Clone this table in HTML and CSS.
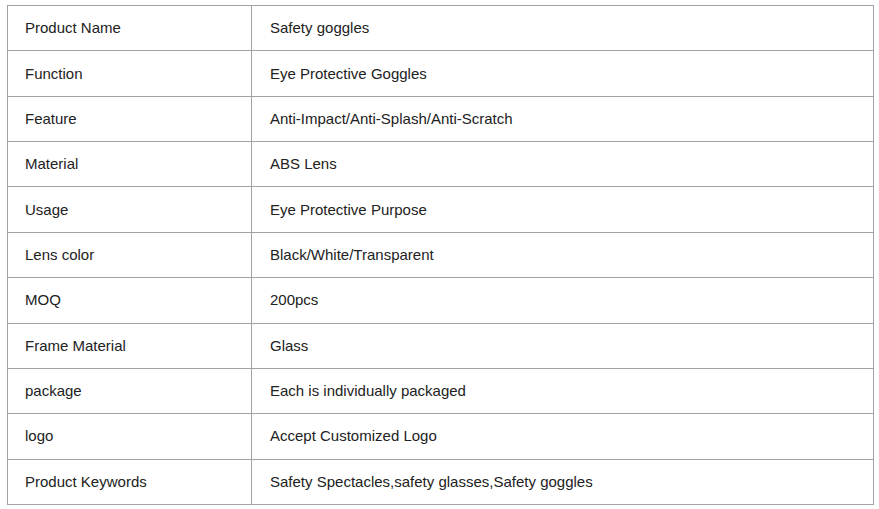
FILE: index.html
```html
<!DOCTYPE html>
<html>
<head>
<meta charset="utf-8">
<link rel="stylesheet" href="styles.css">
</head>
<body>
<table class="spec">
<tr><td class="k">Product Name</td><td>Safety goggles</td></tr>
<tr><td class="k">Function</td><td>Eye Protective Goggles</td></tr>
<tr><td class="k">Feature</td><td>Anti-Impact/Anti-Splash/Anti-Scratch</td></tr>
<tr><td class="k">Material</td><td>ABS Lens</td></tr>
<tr><td class="k">Usage</td><td>Eye Protective Purpose</td></tr>
<tr><td class="k">Lens color</td><td>Black/White/Transparent</td></tr>
<tr><td class="k">MOQ</td><td>200pcs</td></tr>
<tr><td class="k">Frame Material</td><td>Glass</td></tr>
<tr><td class="k">package</td><td>Each is individually packaged</td></tr>
<tr><td class="k">logo</td><td>Accept Customized Logo</td></tr>
<tr><td class="k">Product Keywords</td><td>Safety Spectacles,safety glasses,Safety goggles</td></tr>
</table>
</body>
</html>
```
FILE: styles.css
```css
html, body { margin: 0; padding: 0; background: #fff; }
body { padding: 5px 0 0 7px; font-family: "Liberation Sans", Arial, sans-serif; font-size: 15px; color: #222; }
.spec { border-collapse: collapse; width: 867px; table-layout: fixed; }
.spec td { border: 1px solid #a3a3a3; height: 44.36px; padding: 0 0 1px 18px; vertical-align: middle; box-sizing: border-box; }
.spec td.k { width: 244px; padding-left: 17px; }
.spec tr { height: 45.36px; }
```
